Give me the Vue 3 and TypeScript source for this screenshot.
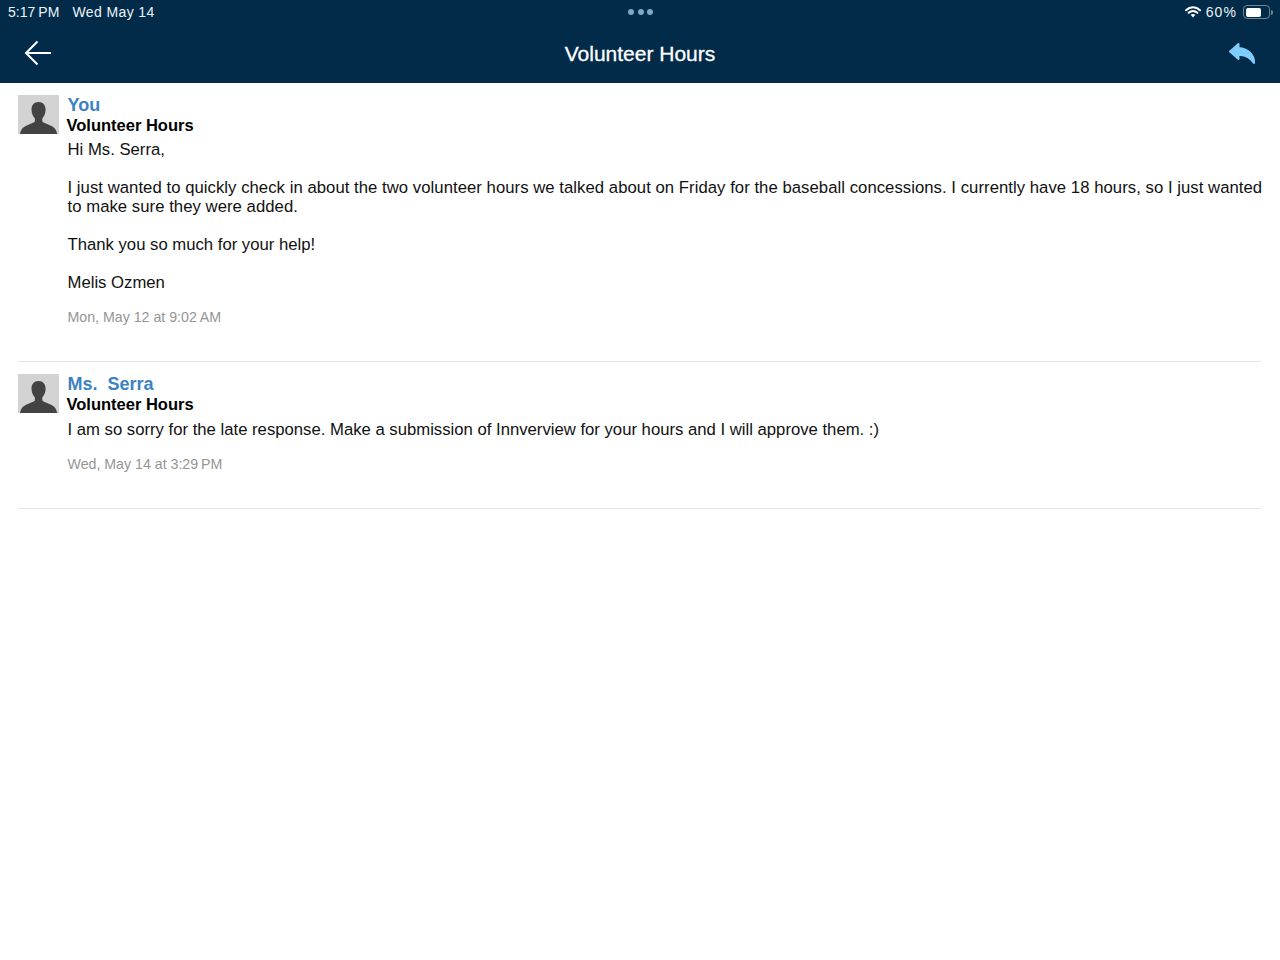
<script setup lang="ts">
interface Message {
  from: string
  subject: string
  paragraphs: string[]
  sent: string
}

const messages: Message[] = [
  {
    from: 'You',
    subject: 'Volunteer Hours',
    paragraphs: [
      'Hi Ms. Serra,',
      'I just wanted to quickly check in about the two volunteer hours we talked about on Friday for the baseball concessions. I currently have 18 hours, so I just wanted to make sure they were added.',
      'Thank you so much for your help!',
      'Melis Ozmen',
    ],
    sent: 'Mon, May 12 at 9:02\u2009AM',
  },
  {
    from: 'Ms.\u00a0 Serra',
    subject: 'Volunteer Hours',
    paragraphs: [
      'I am so sorry for the late response. Make a submission of Innverview for your hours and I will approve them. :)',
    ],
    sent: 'Wed, May 14 at 3:29\u2009PM',
  },
]
</script>

<template>
  <div class="screen">
    <header class="topbar">
      <div class="status">
        <div class="status-left">
          <span class="time">5:17&#8201;PM</span>
          <span class="date">Wed May 14</span>
        </div>
        <div class="dots"><i></i><i></i><i></i></div>
        <div class="status-right">
          <svg width="16" height="12" viewBox="0 0 16 12">
            <path d="M1 4.200C5 .4 11 .4 15 4.200" fill="none" stroke="#fff" stroke-width="2" stroke-linecap="round" />
            <path d="M3.600 6.800c2.600-2.300 6.200-2.300 8.800 0" fill="none" stroke="#fff" stroke-width="2" stroke-linecap="round" />
            <path d="M5.600 8.800 8 11.400l2.400-2.600c-1.400-1.100-3.400-1.100-4.800 0z" fill="#fff" />
          </svg>
          <span class="percent">60%</span>
          <div class="battery"><div class="battery-level"></div></div>
          <div class="battery-tip"></div>
        </div>
      </div>
      <div class="navbar">
        <svg class="back" width="28" height="26" viewBox="0 0 28 26">
          <path d="M27 13H2M13.500 1.500 2 13l11.500 11.500" fill="none" stroke="#fff" stroke-width="2" />
        </svg>
        <h1>Volunteer Hours</h1>
        <svg class="reply" width="28" height="23" viewBox="0 0 28 23">
          <path d="M10.500 2 2 9.500 10.500 17V13C17 12.500 22 15 26 21 26.500 13 20 6.500 10.500 6z" fill="#7fcdff" stroke="#7fcdff" stroke-width="2" stroke-linejoin="round" />
        </svg>
      </div>
    </header>

    <main class="thread">
      <article v-for="(msg, i) in messages" :key="i" class="message">
        <div class="head">
          <svg class="avatar" width="41" height="39" viewBox="0 0 41 39">
            <rect width="41" height="39" fill="#d3d3d3" />
            <path d="M20.500 7c4.600 0 7.100 3.300 7.100 7.700 0 3.500-1.500 6.800-3.300 8.800v2.500c0 1.300 3 2.400 6.800 3.900 4 1.600 6.900 3 8.100 9.100H2c1.200-6.100 4.100-7.500 8.100-9.100 3.800-1.500 6.800-2.600 6.800-3.900v-2.500c-1.800-2-3.400-5.300-3.400-8.800 0-4.400 2.400-7.700 7-7.700z" fill="#434343" />
          </svg>
          <div class="head-text">
            <div class="from">{{ msg.from }}</div>
            <div class="subject">{{ msg.subject }}</div>
          </div>
        </div>
        <div class="body">
          <p v-for="(text, j) in msg.paragraphs" :key="j" :class="{ long: text.length > 150 }">{{ text }}</p>
        </div>
        <div class="sent">{{ msg.sent }}</div>
      </article>
    </main>
  </div>
</template>

<style>
body {
  background: #fff;
}
</style>

<style scoped>
.screen {
  width: 1280px;
  height: 960px;
  overflow: hidden;
  background: #fff;
  font-family: "Liberation Sans", Arial, sans-serif;
  color: #000;
}

.topbar {
  height: 83px;
  background: #012b49;
  color: #fff;
}

.status {
  height: 24px;
  display: grid;
  grid-template-columns: 1fr auto 1fr;
  align-items: center;
  padding: 0 7px 0 8px;
  font-size: 14px;
  color: #eef2f5;
}

.status-left {
  display: flex;
  gap: 13px;
}

.time {
  letter-spacing: 0.05px;
}

.date {
  letter-spacing: 0.4px;
}

.dots {
  display: flex;
  gap: 3.500px;
}

.dots i {
  width: 6px;
  height: 6px;
  border-radius: 50%;
  background: #7ca9c6;
}

.status-right {
  display: flex;
  align-items: center;
  justify-content: flex-end;
}

.percent {
  margin: 0 6px 0 5px;
  letter-spacing: 1.100px;
}

.battery {
  width: 27px;
  height: 14px;
  box-sizing: border-box;
  border: 1px solid #6d8494;
  border-radius: 4px;
  padding: 1.500px;
}

.battery-level {
  width: 15px;
  height: 100%;
  background: #fff;
  border-radius: 2px;
}

.battery-tip {
  width: 2px;
  height: 5px;
  margin-left: 1px;
  background: #6d8494;
  border-radius: 0 2px 2px 0;
}

.navbar {
  height: 59px;
  display: flex;
  align-items: center;
  justify-content: space-between;
  padding: 0 24px;
  position: relative;
}

.navbar h1 {
  position: absolute;
  left: 0;
  right: 0;
  margin: 0;
  text-align: center;
  font-size: 21px;
  font-weight: 400;
  -webkit-text-stroke: 0.3px #fff;
  line-height: 59px;
}

.back {
  margin-top: -1px;
}

.reply {
  margin-top: -1px;
}

.thread {
  padding: 12px 19px 0 18px;
}

.message {
  border-bottom: 1px solid #e4e6e6;
  height: 267px;
  box-sizing: border-box;
}

.message + .message {
  margin-top: 12px;
  height: 135px;
}

.message + .message .body {
  margin-top: 5px;
}

.head {
  display: flex;
  gap: 7px;
}

.avatar {
  flex: none;
}

.head-text {
  padding-top: 1px;
}

.from {
  font-size: 18px;
  line-height: 19px;
  font-weight: 700;
  color: #3b82c4;
  margin-left: 1.500px;
}

.subject {
  font-size: 16.500px;
  line-height: 21px;
  font-weight: 700;
  margin-left: 0.500px;
}

.body {
  margin: 4px -4px 0 49.500px;
  font-size: 16.700px;
  line-height: 19px;
  color: #111;
}

.body p {
  margin: 0 0 19px;
}

.body p.long {
  letter-spacing: 0.045px;
}

.body p:last-child {
  margin-bottom: 0;
}

.sent {
  margin: 16px 0 0 49.500px;
  font-size: 14.200px;
  line-height: 18px;
  color: #959595;
}
</style>
